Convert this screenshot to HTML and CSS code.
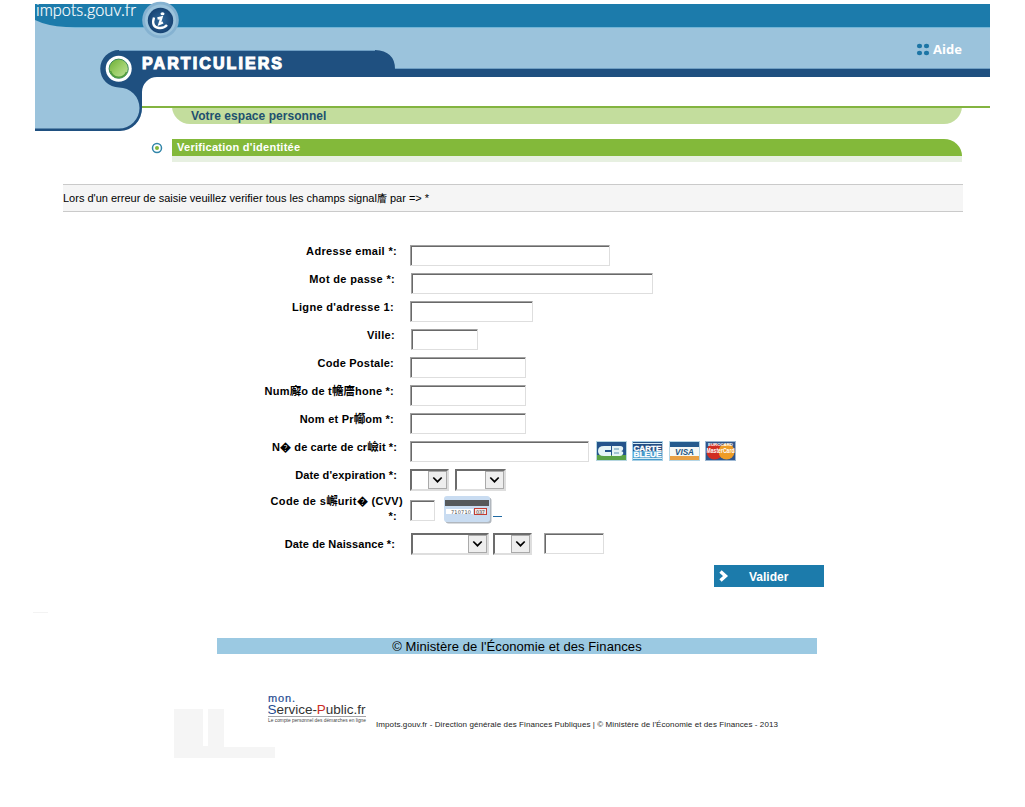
FILE: index.html
```html
<!DOCTYPE html>
<html lang="fr">
<head>
<meta charset="utf-8">
<title>impots.gouv.fr - Particuliers</title>
<link rel="stylesheet" href="styles.css">
</head>
<body>
<div class="page">
<header class="header">
<svg class="banner" width="955" height="128" viewBox="35 4 955 128">
<defs><linearGradient id="green" x1="0" y1="0" x2="1" y2="1"><stop offset="0" stop-color="#6cad32"/><stop offset=".5" stop-color="#9bce68"/><stop offset="1" stop-color="#c3e29d"/></linearGradient>
<radialGradient id="navy"><stop offset="0" stop-color="#326a9c"/><stop offset="1" stop-color="#174373"/></radialGradient></defs>
<path fill="#9bc3dc" d="M35 4H990V73H130L142 100V108A21 22 0 0 1 120 130H35Z"/>
<path fill="#1c7bab" d="M35 4H990V27H66Q47 26 35 20Z"/>
<path fill="#72b5d7" d="M66 27H990V28H75Z"/>
<path fill="#1f5080" d="M119 50H375Q395 51 395 69H990V77H157A15 15 0 0 0 142 92V108A22 23 0 0 1 120 131H35V128.5H119A20.5 20.5 0 0 0 119 87.5A18.7 18.7 0 0 1 119 50Z"/>
<path fill="none" stroke="#6f9fc4" d="M395 68.500H990M119 50.500H375"/>
<circle cx="118.700" cy="68.700" r="13" fill="#fff"/>
<circle cx="118.700" cy="68.700" r="9.600" fill="url(#green)" stroke="#3c8a5c"/>
<path d="M110.500 71a8.500 8.500 0 0 0 16 1" fill="none" stroke="#4f9b3b" stroke-width="1.500"/>
<circle cx="160.500" cy="20" r="18.300" fill="#85b2d1"/><circle cx="160.500" cy="20" r="15.500" fill="#9bc3dc"/>
<circle cx="160.500" cy="20.500" r="12.700" fill="url(#navy)"/>
<path d="M154 17.500Q151 27 159 28Q164 28.500 167 25" fill="none" stroke="#fff" stroke-width="2.400"/>
<path d="M157.500 18.500L161.500 17.500L159.500 24L163 22.500" fill="none" stroke="#fff" stroke-width="2.400"/>
<ellipse cx="162.500" cy="13.800" rx="2" ry="1.500" fill="#fff"/>
<text x="36" y="16" class="brand" textLength="100" lengthAdjust="spacingAndGlyphs">impots.gouv.fr</text>
<text x="142" y="69" class="tab" textLength="140">PARTICULIERS</text>
<g fill="#1c75a5"><ellipse cx="919.500" cy="46" rx="2.600" ry="2.200"/><ellipse cx="926.500" cy="46" rx="2.600" ry="2.200"/><ellipse cx="919.500" cy="53" rx="2.600" ry="2.200"/><ellipse cx="926.500" cy="53" rx="2.600" ry="2.200"/></g>
<text x="933" y="54" class="help" textLength="29">Aide</text>
</svg>
<div class="space">Votre espace personnel</div>
</header>
<div class="heading">
<svg class="bullet" width="12" height="12" viewBox="0 0 12 12"><circle cx="6" cy="6" r="4.500" fill="#fff" stroke="#3286a9" stroke-width="1.500"/><circle cx="6" cy="6" r="2" fill="#83b93a"/></svg>
<h1>Verification d'identitée</h1>
</div>
<p class="notice">Lors d'un erreur de saisie veuillez verifier tous les champs signal<span class="cjk">廥</span> par =&gt; *</p>
<form class="form">
<div class="row"><label class="r397">Adresse email *:</label><input class="w200"></div>
<div class="row"><label class="r395">Mot de passe *:</label><input class="in1 w242"></div>
<div class="row"><label class="r394">Ligne d'adresse 1:</label><input class="w123"></div>
<div class="row"><label class="r395">Ville:</label><input class="in1 w67"></div>
<div class="row"><label class="r394 snug">Code Postale:</label><input class="w116"></div>
<div class="row"><label class="r394 snug">Num<span class="cjk">廨</span>o de t<span class="cjk">幨廧</span>hone *:</label><input class="w116"></div>
<div class="row"><label class="r394 snug">Nom et Pr<span class="cjk">幯</span>om *:</label><input class="w116"></div>
<div class="row"><label class="r397 tight">N� de carte de cr<span class="cjk">嶮</span>it *:</label><input class="w179">
<div class="cards">
<svg width="31" height="20" viewBox="0 0 31 20"><rect width="31" height="20" fill="#b5d6e0"/><rect x="1" y="1" width="29" height="13" fill="#24548b"/><rect x="1" y="14" width="29" height="5" fill="#5aa246"/><path d="M15 5H8Q2 5 2 10T8 15H15V11H9V9H15ZM16 5H24Q28 5 27 8.500Q26.500 10 25 10Q28 10.500 27 13Q26 15 24 15H16Z" fill="#e5f4f5"/><path d="M18 8H23M18 12H23" stroke="#5f96b3"/></svg>
<svg width="31" height="20" viewBox="0 0 31 20"><rect width="31" height="20" fill="#a8d0e6"/><rect x="1" y="1" width="29" height="9" fill="#244f85"/><rect x="1" y="10" width="29" height="9" fill="#489bcb"/><path d="M1 2.500H30M1 17.500H30" stroke="#d8eef5"/><text x="1.500" y="9.500" class="blue" textLength="28" lengthAdjust="spacingAndGlyphs">CARTE</text><text x="1.500" y="16" class="blue" textLength="28" lengthAdjust="spacingAndGlyphs">BLEUE</text></svg>
<svg width="31" height="20" viewBox="0 0 31 20"><rect width="31" height="20" fill="#b5d6e6"/><rect x="1" y="1" width="29" height="18" fill="#f5f8f5"/><rect x="1" y="1" width="29" height="5" fill="#245b8d"/><rect x="1" y="15" width="29" height="4" fill="#e8a043"/><text x="6" y="13.500" class="visa" textLength="19" lengthAdjust="spacingAndGlyphs">VISA</text></svg>
<svg width="31" height="20" viewBox="0 0 31 20"><rect width="31" height="20" fill="#9bb7d3"/><rect x="1" y="1" width="29" height="18" fill="#30558a"/><circle cx="9.500" cy="10.500" r="8" fill="#d12d22"/><circle cx="21.500" cy="10.500" r="8" fill="#ee9c26"/><text x="3" y="4.800" class="euro" textLength="25" lengthAdjust="spacingAndGlyphs">EUROCARD</text><text x="1.500" y="11.800" class="master" textLength="28" lengthAdjust="spacingAndGlyphs">MasterCard</text></svg>
</div></div>
<div class="row"><label class="r397 tight">Date d'expiration *:</label><span class="select s38"><svg viewBox="0 0 19 19"><path d="M4.500 6.500L9.500 11.500L14.500 6.500"/></svg></span><span class="select s50"><svg viewBox="0 0 19 19"><path d="M4.500 6.500L9.500 11.500L14.500 6.500"/></svg></span></div>
<div class="row code"><label class="r403">Code de s<span class="cjk">嶰</span>urit� (CVV)<br><span class="star">*:</span></label><input class="w25">
<a class="cvv" href="#"><svg width="48" height="28" viewBox="0 0 48 28"><rect x="1.500" y="1.500" width="46" height="26" rx="3" fill="#b1b7be"/><rect width="46" height="26" rx="3" fill="#c9dcf1"/><rect x="1" y="4" width="44" height="6" fill="#56595b"/><rect x="2" y="13" width="27" height="5" fill="#fff"/><text x="7" y="17.500" class="digits" textLength="20">710710</text><rect x="30.500" y="12.500" width="12" height="6" fill="#f5e9e9" stroke="#c33e34"/><text x="32" y="17.500" class="digits" textLength="9">037</text></svg></a><span class="dash"></span></div>
<div class="row birth"><label class="r395 tight">Date de Naissance *:</label><span class="select in1 s77"><svg viewBox="0 0 19 19"><path d="M4.500 6.500L9.500 11.500L14.500 6.500"/></svg></span><span class="select s38"><svg viewBox="0 0 19 19"><path d="M4.500 6.500L9.500 11.500L14.500 6.500"/></svg></span><input class="year"></div>
<button class="submit" type="button"><svg width="11" height="12" viewBox="0 0 11 12"><path d="M2.500 1.500L7.500 6L2.500 10.500" fill="none" stroke="#fff" stroke-width="3.400"/></svg><span>Valider</span></button>
</form>
<div class="trace"></div>
<div class="ministry"><span>© Ministère de l'Économie et des Finances</span></div>
<footer class="footer">
<svg width="102" height="68" viewBox="0 0 102 68"><path fill="#f5f5f5" d="M0 19H29V56H34V19H50V57H101V68H0Z"/></svg>
<svg class="service" width="100" height="36" viewBox="267 692 100 36"><text x="268" y="702" class="mon" textLength="27">mon.</text><text x="267.500" y="714" class="public" textLength="98"><tspan fill="#254b91">S</tspan>ervice-<tspan fill="#cc2b24">P</tspan>ublic.fr</text><path d="M268 716.500H366" stroke="#a5a5a9"/><text x="268" y="722" class="tagline" textLength="98" lengthAdjust="spacingAndGlyphs">Le compte personnel des démarches en ligne</text></svg>
<p class="legal">Impots.gouv.fr - Direction générale des Finances Publiques | © Ministère de l'Économie et des Finances - 2013</p>
</footer>
</div>
</body>
</html>
```
FILE: styles.css
```css
* { box-sizing: border-box; }
body { margin: 0; background: #fff; color: #000; font-family: "Liberation Sans", "Noto Sans CJK TC", sans-serif; }
.page { width: 1025px; height: 807px; padding-top: 4px; overflow: hidden; }
.header { position: relative; width: 955px; height: 135px; margin-left: 35px; padding: 102px 0 0 107px; }
.header::after { content: ""; position: absolute; left: 107px; right: 0; top: 102px; height: 2px; background: #83b440; }
.banner { position: absolute; left: 0; top: 0; overflow: visible; }
.brand { font: 300 17px Lato, sans-serif; fill: #fff; stroke: #fff; stroke-width: .2px; }
.tab { font: bold 16px "Liberation Sans", sans-serif; fill: #fff; stroke: #fff; stroke-width: 1.1px; }
.help { font: bold 13px "Open Sans", sans-serif; fill: #fff; }
.space { width: 790px; height: 18px; margin-left: 30px; padding: 3px 0 0 19px; border-radius: 0 0 18px 18px; background: #c3dd9d; color: #20506f; font: bold 12px/14px "Liberation Sans", sans-serif; letter-spacing: .04px; }
.heading { display: flex; gap: 9px; width: 811px; height: 45px; margin-left: 151px; }
.bullet { margin-top: 3px; }
.heading h1 { width: 790px; height: 23px; margin: 0; padding: 1px 0 0 5px; border-bottom: 6px solid #e7f0e1; border-top-right-radius: 18px 17px; background: #83b93a; color: #fff; font-size: 11px; line-height: 14px; letter-spacing: .27px; }
.notice { width: 900px; height: 28px; margin: 0 0 0 63px; border: solid #cacaca; border-width: 1px 0; background: #f5f5f5; font-size: 11px; line-height: 27px; white-space: nowrap; }
.cjk { font: 10px/1 "Noto Sans CJK TC", sans-serif; letter-spacing: 0; }
.form { display: flex; flex-direction: column; width: 1025px; height: 400px; padding-top: 33px; }
.row { display: flex; align-items: flex-start; height: 28px; flex: none; }
label { width: 410px; font-weight: bold; font-size: 11px; line-height: 13px; letter-spacing: .33px; text-align: right; white-space: nowrap; }
label .cjk { font-weight: bold; font-size: 11.5px; line-height: 11px; }
.r394 { padding-right: 16px; }
.r395 { padding-right: 15px; }
.r397 { padding-right: 13px; }
.r403 { padding-right: 7px; line-height: 15px; }
.snug { letter-spacing: .24px; }
.tight { letter-spacing: .1px; }
.star { padding-right: 6px; }
input { width: 116px; height: 21px; margin: 0; padding: 0; border: 1px solid #a0a0a0; border-right-color: #dedede; border-bottom-color: #dedede; border-radius: 0; box-shadow: inset 1px 1px #696969; background: #fff; outline: 0; }
.in1 { margin-left: 1px; }
.w200 { width: 200px; }
.w242 { width: 242px; }
.w123 { width: 123px; }
.w67 { width: 67px; }
.w116 { width: 116px; }
.w179 { width: 179px; }
.w25 { width: 25px; }
.cards { display: flex; gap: 5.3px; margin-left: 7px; }
.blue { font: bold 7px "Liberation Sans"; fill: #fff; stroke: #fff; stroke-width: .3px; }
.visa { font: italic bold 9px "Liberation Sans"; fill: #215481; }
.euro { font: bold 4px "Liberation Sans"; fill: #fff; }
.master { font: bold 7px "Liberation Sans"; fill: #fff; }
.select { display: flex; justify-content: flex-end; height: 22px; border: 2px solid #6c6c6c; border-right-color: #dedede; border-bottom-color: #dedede; }
.select + .select { margin-left: 6px; }
.select svg { width: 19px; height: 18px; border: 1px solid #aaa; background: #eee; fill: none; stroke: #000; stroke-width: 2px; }
.s38 { width: 39px; }
.s50 { width: 51px; }
.s77 { width: 78px; }
.birth .select + .select { margin-left: 4px; width: 39px; }
.code { height: 36px; }
.code label { margin-top: -3px; }
.code input { margin-top: 3px; }
.cvv { margin: -1px 0 0 9px; }
.digits { font: 5px "DejaVu Sans"; fill: #444; }
.dash { width: 9px; height: 1px; margin: 19px 0 0 1px; background: #206aa3; }
.birth label { padding-top: 5px; }
.birth .year { width: 60px; margin-left: 12px; }
.submit { display: flex; flex: none; align-items: center; width: 110px; height: 22px; margin: 4px 0 0 714px; padding: 0 0 0 4px; border: 0; background: #1c7bab; color: #fff; font: bold 12px "Liberation Sans"; }
.submit span { margin: 1px 0 0 20px; }
.trace { width: 15px; height: 1px; margin-left: 33px; background: #f3f3f3; }
.ministry { width: 600px; height: 16px; margin: 25px 0 0 217px; background: #9bc9e2; font-size: 13px; line-height: 17px; letter-spacing: .08px; text-align: center; white-space: nowrap; }
.footer { display: flex; align-items: flex-start; height: 68px; margin: 36px 0 0 174px; }
.footer svg { flex: none; }
.footer .service { margin: 2px 0 0 -9px; }
.mon { font: 11px "Liberation Sans"; fill: #254b91; stroke: #254b91; stroke-width: .2px; }
.public { font: 13.5px "Liberation Sans"; fill: #333; }
.tagline { font: 5px "Liberation Sans"; fill: #444; }
.legal { margin: 29px 0 0 9px; color: #222; font-size: 8px; line-height: 11px; letter-spacing: .09px; white-space: nowrap; }
```
